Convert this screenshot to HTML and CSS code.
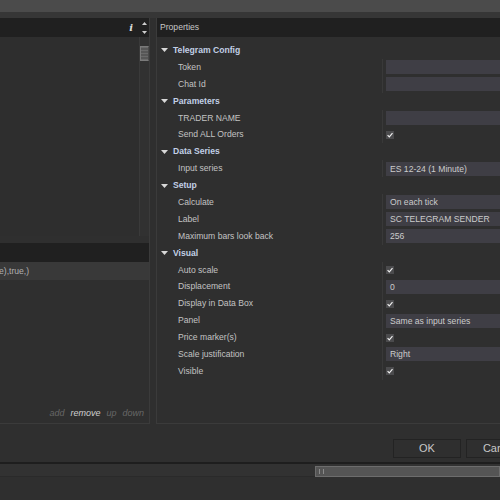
FILE: index.html
```html
<!DOCTYPE html>
<html lang="en">
<head>
  <meta charset="UTF-8" />
  <title>Properties</title>
  <link rel="stylesheet" href="styles.css">
</head>
<body>
  <div class="titlebar"></div>
  <div class="subbar"></div>

  <div class="main">
    <!-- Left side: list of indicators -->
    <div class="left">
      <div class="left-head">
        <span class="info">i</span>
        <div class="spin">
          <svg width="5" height="3" viewBox="0 0 5 3"><polygon points="0,3 5,3 2.5,0" fill="#cfcfcf"/></svg>
          <svg width="5" height="3" viewBox="0 0 5 3"><polygon points="0,0 5,0 2.5,3" fill="#cfcfcf"/></svg>
        </div>
      </div>
      <div class="list">
        <div class="list-body"></div>
        <div class="list-scroll"><div class="thumb"></div></div>
      </div>
      <div class="left-head second"></div>
      <div class="code-row">e),true,)</div>
      <div class="left-body">
        <div class="actions">
          <span class="act">add</span>
          <span class="act on">remove</span>
          <span class="act">up</span>
          <span class="act">down</span>
        </div>
      </div>
    </div>

    <!-- Right side: property grid -->
    <div class="props">
      <div class="props-head">Properties</div>
      <div class="tree" id="tree"></div>
    </div>
  </div>

  <div class="footer">
    <div class="btn">OK</div>
    <div class="btn">Cancel</div>
  </div>
  <div class="hsep"></div>
  <div class="hscroll"><div class="hthumb"><span class="grip"></span></div></div>

  <script>
    const tree = document.getElementById("tree");
    const groups = [
      ["Telegram Config", [["Token", "field", ""], ["Chat Id", "field", ""]]],
      ["Parameters", [["TRADER NAME", "field", ""], ["Send ALL Orders", "check"]]],
      ["Data Series", [["Input series", "field", "ES 12-24 (1 Minute)"]]],
      ["Setup", [
        ["Calculate", "field", "On each tick"],
        ["Label", "field", "SC TELEGRAM SENDER"],
        ["Maximum bars look back", "field", "256"]
      ]],
      ["Visual", [
        ["Auto scale", "check"],
        ["Displacement", "field", "0"],
        ["Display in Data Box", "check"],
        ["Panel", "field", "Same as input series"],
        ["Price marker(s)", "check"],
        ["Scale justification", "field", "Right"],
        ["Visible", "check"]
      ]]
    ];

    const arrow = '<svg class="tri" width="7" height="4" viewBox="0 0 7 4"><polygon points="0,0 7,0 3.5,4" fill="#d8d8d8"/></svg>';
    const check = '<svg class="check" width="8" height="8" viewBox="0 0 8 8"><rect width="8" height="8" fill="#4b4b4d"/><path d="M1.6 4.1 L3.3 5.8 L6.5 2.2" stroke="#f0f0f0" stroke-width="1.2" fill="none"/></svg>';

    let html = "";
    groups.forEach(([title, items]) => {
      html += `<div class="row cat"><div class="name">${arrow}<span>${title}</span></div></div>`;
      items.forEach(([label, kind, value]) => {
        const cell = kind === "check" ? check : `<div class="field">${value}</div>`;
        html += `<div class="row"><div class="name">${label}</div><div class="val">${cell}</div></div>`;
      });
    });
    tree.innerHTML = html;
  </script>
</body>
</html>
```

FILE: styles.css
```css
body {
  margin: 0;
  width: 500px;
  height: 500px;
  overflow: hidden;
  background: #2f2f2f;
  font-family: "Liberation Sans", Arial, sans-serif;
  font-size: 8.6px;
  color: #c3c3c3;
}

.titlebar {
  height: 12px;
  background: #4b4b4b;
}

.subbar {
  height: 6px;
  background: #363636;
}

.main {
  display: flex;
  height: 406px;
}

/* left column */
.left {
  width: 149px;
  border-right: 1px solid #3b3b3b;
  border-bottom: 1px solid #3b3b3b;
  display: flex;
  flex-direction: column;
}

.left-head {
  height: 19px;
  flex: none;
  background: #202020;
  display: flex;
  align-items: center;
}

.info {
  flex: 1;
  text-align: right;
  padding-right: 6px;
  font-family: "DejaVu Serif", serif;
  font-style: italic;
  font-weight: bold;
  font-size: 10px;
  color: #dcdcdc;
}

.spin {
  width: 10px;
  display: flex;
  flex-direction: column;
  align-items: center;
  gap: 6px;
}

.spin svg {
  display: block;
}

.list {
  height: 199px;
  flex: none;
  display: flex;
}

.list-body {
  flex: 1;
  background: #2e2e2e;
}

.list-scroll {
  width: 9px;
  border-left: 1px solid #3a3a3a;
  background: #313131;
}

.thumb {
  margin-top: 9px;
  height: 13px;
  border: 1px solid #7a7a7a;
  border-right-color: #4a4a4a;
  background: repeating-linear-gradient(#6a6a6a 0 1px, #575757 1px 3px);
}

.left-head.second {
  margin-top: 7px;
}

.code-row {
  height: 18px;
  flex: none;
  line-height: 18px;
  background: #393939;
  color: #b0b0b0;
  margin-left: -1px;
}

.left-body {
  flex: 1;
  display: flex;
  align-items: flex-end;
  justify-content: flex-end;
}

.actions {
  display: flex;
  gap: 6px;
  padding: 0 5px 5px 0;
  font-style: italic;
  font-size: 9px;
}

.act {
  color: #676767;
}

.act.on {
  color: #cfcfcf;
}

/* property grid */
.props {
  flex: 1;
  margin-left: 6px;
  border-left: 1px solid #3b3b3b;
  border-bottom: 1px solid #3b3b3b;
}

.props-head {
  height: 19px;
  line-height: 19px;
  padding-left: 3px;
  background: #202020;
  color: #c6c6c6;
}

.tree {
  padding-top: 5px;
}

.row {
  height: 16.9px;
  display: flex;
}

.name {
  width: 204px;
  flex: none;
  padding-left: 21px;
  line-height: 16.9px;
  white-space: nowrap;
}

.cat .name {
  padding-left: 4px;
  display: flex;
  align-items: center;
  gap: 5px;
  font-weight: bold;
  color: #c2cfe6;
}

.tri {
  display: block;
}

.val {
  flex: 1;
  border-left: 1px solid #393939;
  padding-left: 3px;
  display: flex;
  align-items: center;
}

.field {
  flex: 1;
  height: 14px;
  line-height: 14px;
  padding-left: 4px;
  background: #3f3e45;
  color: #cccccc;
  white-space: nowrap;
}

.check {
  display: block;
}

/* bottom */
.footer {
  height: 38px;
  display: flex;
  gap: 5px;
  padding-left: 393px;
  padding-top: 15px;
  box-sizing: border-box;
}

.btn {
  flex: none;
  width: 66px;
  height: 17px;
  line-height: 17px;
  border: 1px solid #232323;
  text-align: center;
  font-size: 11px;
  color: #c8c8c8;
}

.hsep {
  height: 2px;
  background: #1e1e1e;
}

.hscroll {
  height: 13px;
  background: #323232;
  border-bottom: 1px solid #2a2a2a;
  padding-top: 2px;
  box-sizing: border-box;
}

.hthumb {
  margin-left: 315px;
  height: 9px;
  border: 1px solid #6d6d6d;
  background: #555555;
  display: flex;
  align-items: center;
}

.grip {
  width: 3px;
  height: 5px;
  margin-left: 3px;
  border-left: 1px solid #8a8a8a;
  border-right: 1px solid #8a8a8a;
}
```
